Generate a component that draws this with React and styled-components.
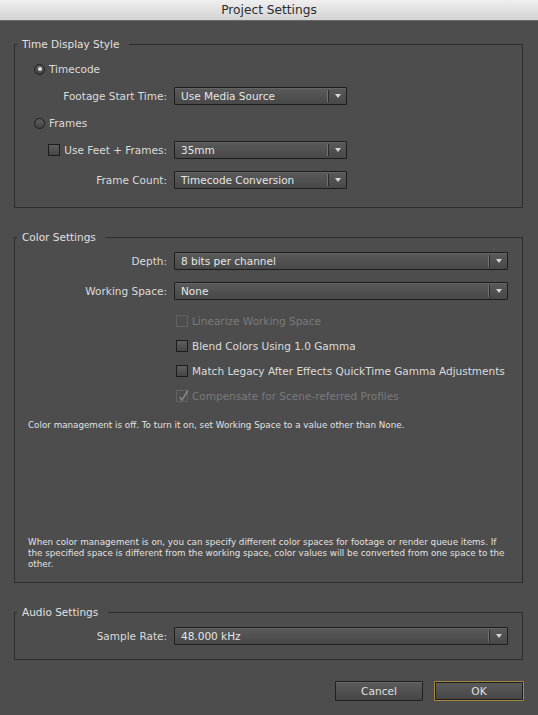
import React from "react"
import styled, { createGlobalStyle } from "styled-components"

const GlobalStyle = createGlobalStyle`
  html, body {
    margin: 0;
    padding: 0;
    background: #4d4d4d;
  }
  body {
    font-family: "DejaVu Sans", "Liberation Sans", sans-serif;
  }
`

const Window = styled.div`
  width: 538px;
  height: 715px;
  display: flex;
  flex-direction: column;
  background: #4d4d4d;
  overflow: hidden;
`

const TitleBar = styled.div`
  flex: none;
  height: 20px;
  border-bottom: 1px solid #6a6a6a;
  background: linear-gradient(#efefef, #d3d3d3);
  display: flex;
  align-items: center;
  justify-content: center;
  font-size: 12.2px;
  color: #2c2c2c;
`

const Content = styled.div`
  flex: 1;
  min-height: 0;
  display: flex;
  flex-direction: column;
  gap: 22px;
  padding: 16px 15px 0 14px;
`

const Group = styled.fieldset`
  margin: 0;
  min-width: 0;
  padding: ${p => p.$pad};
  border: 1px solid #2d2d2d;
  display: flex;
  flex-direction: column;
  flex: ${p => (p.$grow ? 1 : "none")};
`

const Legend = styled.legend`
  margin-left: 2px;
  padding: 0 10px 0 5px;
  line-height: 14px;
  font-size: 10.5px;
  color: #e0e0e0;
`

const Row = styled.div`
  display: flex;
  align-items: center;
  height: 18px;
  margin-top: ${p => p.$mt || 0}px;
  padding-left: ${p => p.$indent || 0}px;
`

const Label = styled.div`
  flex: none;
  width: 152px;
  margin-right: 7px;
  display: flex;
  align-items: center;
  justify-content: flex-end;
  gap: 4px;
  font-size: 10.5px;
  color: #dcdcdc;
  white-space: nowrap;
`

const OptionText = styled.span`
  margin-left: 4px;
  font-size: 10.5px;
  color: ${p => (p.$disabled ? "#7a7a7a" : "#dcdcdc")};
  white-space: nowrap;
`

const Select = styled.div`
  box-sizing: border-box;
  height: 18px;
  width: ${p => (p.$w ? `${p.$w}px` : "auto")};
  flex: ${p => (p.$w ? "none" : 1)};
  display: flex;
  align-items: center;
  border: 1px solid #1d1d1d;
  border-radius: 1px;
  background: linear-gradient(#5a5a5a, #484848);
  box-shadow: inset 0 1px 0 rgba(255, 255, 255, 0.07);
  color: #e6e6e6;
  font-size: 10.5px;
`

const SelectValue = styled.span`
  flex: 1;
  padding-left: 6px;
  white-space: nowrap;
`

const SelectArrow = styled.span`
  width: 17px;
  height: 12px;
  display: flex;
  align-items: center;
  justify-content: center;
  border-left: 1px solid #2a2a2a;
  box-shadow: -1px 0 0 #727272;

  &::after {
    content: "";
    border-left: 3.5px solid transparent;
    border-right: 3.5px solid transparent;
    border-top: 4px solid #d8d8d8;
  }
`

const Radio = styled.span`
  box-sizing: border-box;
  width: 11px;
  height: 11px;
  flex: none;
  border-radius: 50%;
  border: 1px solid #1c1c1c;
  background: linear-gradient(#5c5c5c, #444);
  display: flex;
  align-items: center;
  justify-content: center;

  &::after {
    content: "";
    display: ${p => (p.$on ? "block" : "none")};
    width: 4px;
    height: 4px;
    border-radius: 50%;
    background: #e0e0e0;
  }
`

const Box = styled.span`
  box-sizing: border-box;
  position: relative;
  flex: none;
  width: 12px;
  height: 12px;
  border: 1px solid ${p => (p.$disabled ? "#626262" : "#1c1c1c")};
  background: ${p => (p.$disabled ? "#4d4d4d" : "linear-gradient(#5e5e5e, #464646)")};
  margin-left: ${p => p.$ml || 0}px;

  svg {
    position: absolute;
    left: 0;
    top: -2px;
    overflow: visible;
  }
`

const Note = styled.p`
  margin: ${p => (p.$bottom ? "auto 0 0" : `${p.$mt || 0}px 0 0`)};
  padding-left: 13px;
  font-size: 8.75px;
  line-height: 11px;
  color: #e2e2e2;
`

const Footer = styled.div`
  flex: none;
  display: flex;
  justify-content: flex-end;
  gap: 11px;
  padding: 21px 14px 14px 0;
`

const Button = styled.button`
  box-sizing: border-box;
  height: 20px;
  width: ${p => p.$w}px;
  padding: 0;
  border: 1px solid ${p => (p.$default ? "#a9873c" : "#202020")};
  border-radius: 1px;
  background: linear-gradient(#5b5b5b, #464646);
  box-shadow: ${p =>
    p.$default ? "inset 0 0 0 1px #1e1e1e" : "inset 0 1px 0 rgba(255,255,255,0.08)"};
  color: #e2e2e2;
  font-family: inherit;
  font-size: 10.6px;
`

const Dropdown = ({ value, width }) => (
  <Select $w={width}>
    <SelectValue>{value}</SelectValue>
    <SelectArrow />
  </Select>
)

const CheckMark = () => (
  <svg width="12" height="14" viewBox="0 0 12 14">
    <polyline points="2.5,8 5,11 11,1.5" fill="none" stroke="#808080" strokeWidth="1.8" />
  </svg>
)

const CheckOption = ({ text, disabled, checked, mt }) => (
  <Row $mt={mt}>
    <Box $disabled={disabled} $ml={161}>
      {checked && <CheckMark />}
    </Box>
    <OptionText $disabled={disabled}>{text}</OptionText>
  </Row>
)

export default function App() {
  return (
    <Window>
      <GlobalStyle />
      <TitleBar>Project Settings</TitleBar>
      <Content>
        <Group $pad="9px 0 18px 0">
          <Legend>Time Display Style</Legend>
          <Row $indent={19}>
            <Radio $on />
            <OptionText>Timecode</OptionText>
          </Row>
          <Row $mt={9}>
            <Label>Footage Start Time:</Label>
            <Dropdown value="Use Media Source" width={173} />
          </Row>
          <Row $mt={9} $indent={19}>
            <Radio />
            <OptionText>Frames</OptionText>
          </Row>
          <Row $mt={9}>
            <Label>
              <Box />
              Use Feet + Frames:
            </Label>
            <Dropdown value="35mm" width={173} />
          </Row>
          <Row $mt={12}>
            <Label>Frame Count:</Label>
            <Dropdown value="Timecode Conversion" width={173} />
          </Row>
        </Group>

        <Group $grow $pad="8px 14px 12px 0">
          <Legend>Color Settings</Legend>
          <Row>
            <Label>Depth:</Label>
            <Dropdown value="8 bits per channel" />
          </Row>
          <Row $mt={12}>
            <Label>Working Space:</Label>
            <Dropdown value="None" />
          </Row>
          <CheckOption mt={12} disabled text="Linearize Working Space" />
          <CheckOption mt={7} text="Blend Colors Using 1.0 Gamma" />
          <CheckOption mt={7} text="Match Legacy After Effects QuickTime Gamma Adjustments" />
          <CheckOption mt={7} disabled checked text="Compensate for Scene-referred Profiles" />
          <Note $mt={15}>
            Color management is off. To turn it on, set Working Space to a value other than None.
          </Note>
          <Note $bottom>
            When color management is on, you can specify different color spaces for footage or render queue items. If
            <br />
            the specified space is different from the working space, color values will be converted from one space to the
            <br />
            other.
          </Note>
        </Group>

        <Group $pad="8px 14px 14px 0">
          <Legend>Audio Settings</Legend>
          <Row>
            <Label>Sample Rate:</Label>
            <Dropdown value="48.000 kHz" />
          </Row>
        </Group>
      </Content>
      <Footer>
        <Button $w={88}>Cancel</Button>
        <Button $w={90} $default>OK</Button>
      </Footer>
    </Window>
  )
}
